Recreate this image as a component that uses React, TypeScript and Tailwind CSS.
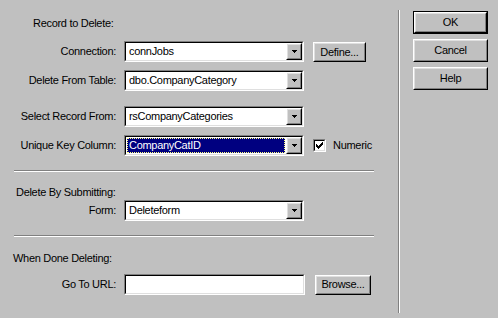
import type { ReactNode } from "react";

function Raised({ className = "", children }: { className?: string; children?: ReactNode }) {
  return (
    <div
      className={`border border-t-white border-l-white border-r-black border-b-black bg-[#c0c0c0] ${className}`}
    >
      <div className="flex h-full w-full items-center justify-center border border-t-[#dfdfdf] border-l-[#dfdfdf] border-r-[#808080] border-b-[#808080]">
        {children}
      </div>
    </div>
  );
}

function Sunken({ className = "", children }: { className?: string; children?: ReactNode }) {
  return (
    <div
      className={`border border-t-[#808080] border-l-[#808080] border-r-white border-b-white ${className}`}
    >
      <div className="flex h-full w-full border border-t-black border-l-black border-r-[#dfdfdf] border-b-[#dfdfdf] bg-white">
        {children}
      </div>
    </div>
  );
}

function Combo({ value, selected = false }: { value: string; selected?: boolean }) {
  return (
    <Sunken className="h-[21px] w-[180px]">
      <div className="flex min-w-0 flex-1 items-center p-[1px]">
        {selected ? (
          <div className="flex h-full w-full items-center border border-dotted border-[#ffff80] bg-[#000080] pl-[1px] text-white">
            {value}
          </div>
        ) : (
          <span className="pl-[2px]">{value}</span>
        )}
      </div>
      <Raised className="h-full w-[16px]">
        <svg width="7" height="4" viewBox="0 0 7 4">
          <path d="M1 0h5v1H1zM2 1h3v1H2zM3 2h1v1H3z" fill="#000" />
        </svg>
      </Raised>
    </Sunken>
  );
}

function Row({ label, children, className = "" }: { label: string; children: ReactNode; className?: string }) {
  return (
    <div className={`flex h-[21px] items-center ${className}`}>
      <div className="w-[116px] text-right">{label}</div>
      <div className="ml-[8px] flex items-center">{children}</div>
    </div>
  );
}

function Separator({ className = "" }: { className?: string }) {
  return (
    <div
      className={`ml-[14px] h-[2px] w-[360px] border-t border-b border-t-[#808080] border-b-white ${className}`}
    />
  );
}

export default function App() {
  return (
    <div className="flex h-[318px] w-[498px] bg-[#c0c0c0] font-['Liberation_Sans',Arial,sans-serif] text-[11px] leading-[13px] tracking-[-0.3px] text-black">
      <div className="w-[398px]">
        <div className="mt-[14px] flex h-[18px] items-center pl-[33px]">Record to Delete:</div>

        <Row label="Connection:" className="mt-[9px]">
          <Combo value="connJobs" />
          <Raised className="ml-[9px] mt-[1px] h-[20px] w-[53px]">Define...</Raised>
        </Row>
        <Row label="Delete From Table:" className="mt-[8px]">
          <Combo value="dbo.CompanyCategory" />
        </Row>
        <Row label="Select Record From:" className="mt-[15px]">
          <Combo value="rsCompanyCategories" />
        </Row>
        <Row label="Unique Key Column:" className="mt-[8px]">
          <Combo value="CompanyCatID" selected />
          <div className="ml-[9px] flex items-center">
            <Sunken className="h-[13px] w-[13px]">
              <svg width="9" height="9" viewBox="0 0 9 9" className="block">
                <path d="M1 3h1v3H1zM2 4h1v3H2zM3 5h1v3H3zM4 4h1v3H4zM5 3h1v3H5zM6 2h1v3H6zM7 1h1v3H7z" fill="#000" />
              </svg>
            </Sunken>
            <span className="ml-[7px]">Numeric</span>
          </div>
        </Row>

        <Separator className="mt-[14px]" />

        <div className="mt-[13px] flex h-[14px] items-center pl-[16px]">Delete By Submitting:</div>
        <Row label="Form:" className="mt-[1px]">
          <Combo value="Deleteform" />
        </Row>

        <Separator className="mt-[14px]" />

        <div className="mt-[14px] flex h-[14px] items-center pl-[13px]">When Done Deleting:</div>
        <Row label="Go To URL:" className="mt-[9px]">
          <Sunken className="h-[21px] w-[181px]" />
          <Raised className="ml-[10px] h-[20px] w-[56px]">Browse...</Raised>
        </Row>
      </div>

      <div className="mt-[10px] h-[303px] w-[2px] border-l border-r border-l-[#808080] border-r-white" />

      <div className="ml-[13px] mt-[11px] flex flex-col gap-[5px]">
        <div className="h-[23px] w-[75px] border border-black">
          <Raised className="h-full w-full">OK</Raised>
        </div>
        <Raised className="h-[23px] w-[75px]">Cancel</Raised>
        <Raised className="h-[23px] w-[75px]">Help</Raised>
      </div>
    </div>
  );
}
